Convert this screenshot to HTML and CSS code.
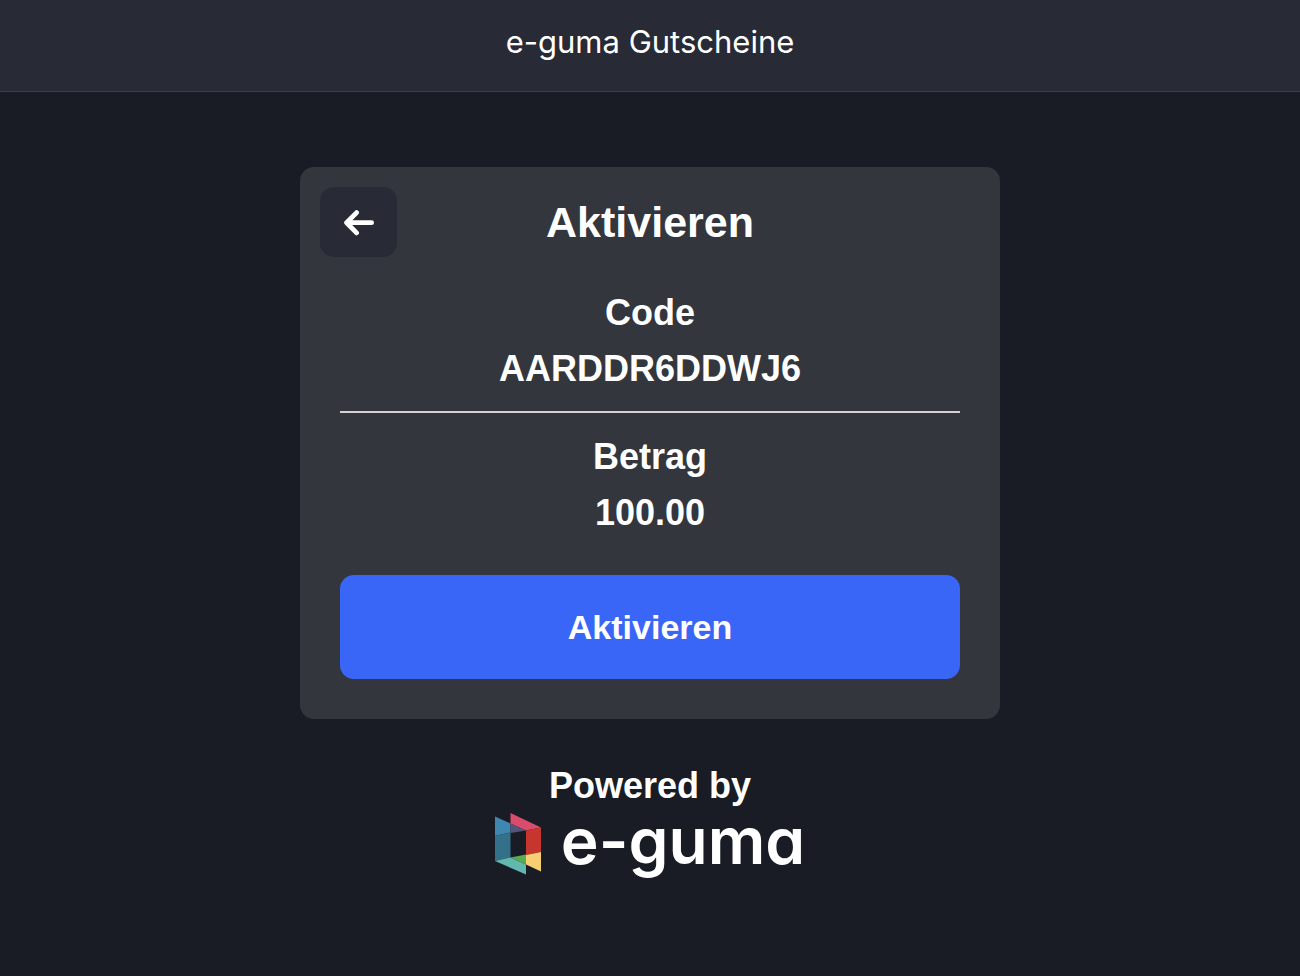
FILE: index.html
```html
<!DOCTYPE html>
<html lang="de">
<head>
  <meta charset="UTF-8" />
  <meta name="viewport" content="width=device-width, initial-scale=1.0" />
  <title>e-guma Gutscheine</title>
  <link rel="stylesheet" href="styles.css">
</head>
<body>

  <header class="topbar">e-guma Gutscheine</header>

  <main class="page">
    <section class="card">
      <div class="card-header">
        <button class="back-btn" type="button" aria-label="Zurück">
          <svg width="32" height="28" viewBox="0 0 32 28" fill="none" stroke="#fff" stroke-width="4.8" stroke-linecap="round" stroke-linejoin="round">
            <path d="M28.6 14.7H3.6M13.6 4.6L3.6 14.7l10 10.2" />
          </svg>
        </button>
        <h1>Aktivieren</h1>
      </div>

      <!-- Voucher details -->
      <div class="card-body">
        <dl class="field">
          <dt>Code</dt>
          <dd>AARDDR6DDWJ6</dd>
        </dl>
        <hr />
        <dl class="field">
          <dt>Betrag</dt>
          <dd>100.00</dd>
        </dl>
        <button class="submit-btn" type="button">Aktivieren</button>
      </div>
    </section>

    <footer class="powered">
      <p>Powered by</p>
      <div class="logo">
        <svg class="logo-mark" width="46" height="62" viewBox="0 0 46 62">
          <path fill="#3f86b0" d="M0 3.5L15.5 10.5V19.5L0 23z" />
          <path fill="#33708a" d="M0 23L15.5 19.5V44.5L0 48z" />
          <path fill="#da4c6c" d="M15.5 0L46 14.5L31 17.5L15.5 10.5z" />
          <path fill="#545579" d="M15.5 10.5L31 17.5L15.5 20z" />
          <path fill="#c6352e" d="M31 17.5L46 14.5V39L31 42z" />
          <path fill="#f7cf72" d="M31 42L46 39V58.5L31 51.5z" />
          <path fill="#62b8ae" d="M0 48L15.5 44.5L31 51.5V61.5z" />
          <path fill="#58ab50" d="M15.5 44.5L31 41.5V51.5z" />
        </svg>
        <span class="logo-text">e-guma</span>
      </div>
    </footer>
  </main>

</body>
</html>
```
FILE: styles.css
```css
* {
  margin: 0;
  padding: 0;
  box-sizing: border-box;
}

body {
  background: #191c24;
  color: #fff;
  font-family: "Liberation Sans", Arial, sans-serif;
  min-height: 100vh;
}

.topbar {
  padding: 22px 20px 29px;
  background: #282a36;
  border-bottom: 1px solid #3b3d47;
  font-family: Inter, sans-serif;
  font-size: 31px;
  line-height: 40px;
  text-align: center;
}

.page {
  display: flex;
  flex-direction: column;
  align-items: center;
  gap: 40px;
  padding: 75px 20px 40px;
}

.card {
  width: 100%;
  max-width: 700px;
  padding: 20px 20px 40px;
  background: #33363d;
  border-radius: 14px;
}

.card-header {
  display: grid;
  grid-template-columns: 77px 1fr 77px;
  align-items: center;
}

.card-header h1 {
  font-size: 43px;
  line-height: 56px;
  text-align: center;
}

button {
  border: none;
  color: #fff;
  font-family: inherit;
  font-weight: bold;
  cursor: pointer;
}

.back-btn {
  display: flex;
  align-items: center;
  justify-content: center;
  height: 70px;
  background: #282a36;
  border-radius: 14px;
}

.card-body {
  padding: 28px 20px 0;
}

.field,
.powered p {
  font-size: 36px;
  font-weight: bold;
  line-height: 56px;
  text-align: center;
}

.powered p {
  line-height: 54px;
}

hr {
  margin: 14px 0 16px;
  border: none;
  border-top: 2px solid #d5d2d3;
}

.submit-btn {
  width: 100%;
  height: 104px;
  margin-top: 34px;
  background: #3966f6;
  border-radius: 14px;
  font-size: 34px;
}

.logo {
  display: flex;
  align-items: flex-start;
  justify-content: center;
  gap: 20px;
  height: 62px;
}

.logo-text {
  font-family: Inter, sans-serif;
  font-size: 64px;
  font-weight: 600;
  line-height: 56px;
  /* single-storey a */
  font-feature-settings: "cv11";
}
```
